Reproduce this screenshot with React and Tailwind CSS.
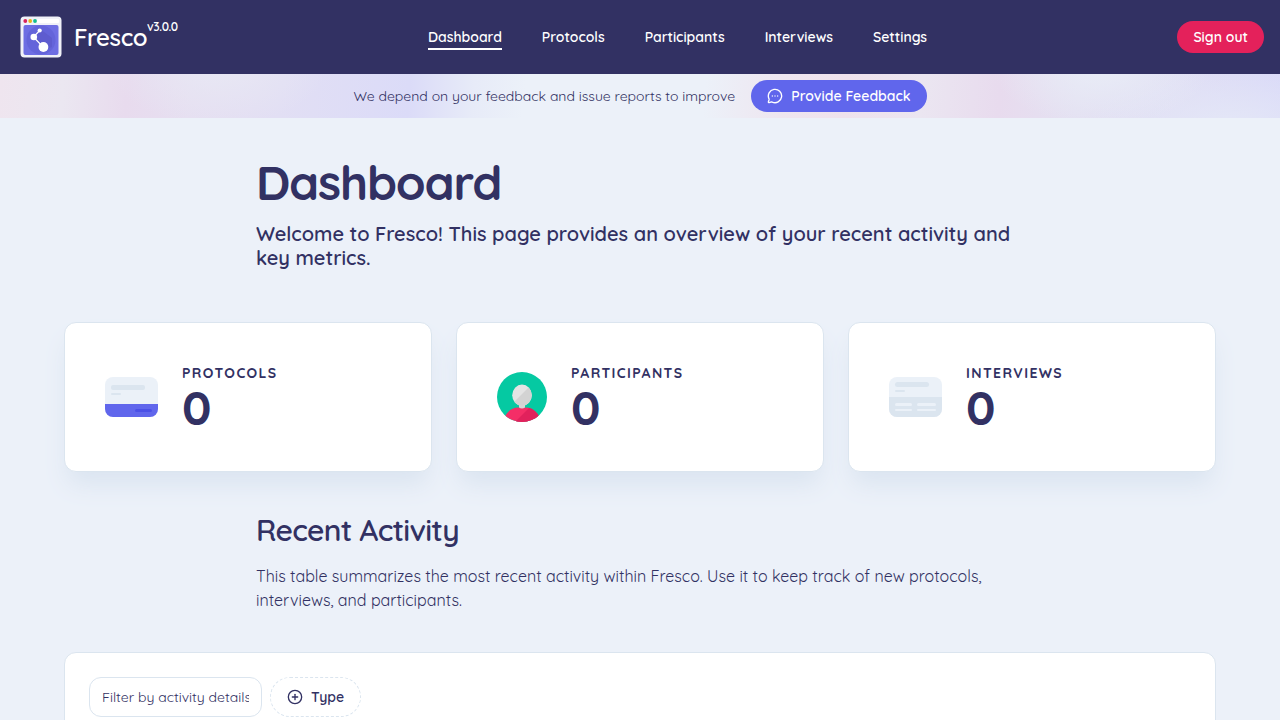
import React from "react";
import { CirclePlus, MessageCircleMore } from "lucide-react";

function Logo() {
  return (
    <svg viewBox="0 0 42 42" className="size-[42px] shrink-0" aria-hidden="true">
      <rect x="0.5" y="0.5" width="41" height="41" rx="4" fill="#f0f1f8" />
      <rect x="17" y="3" width="22" height="4" rx="1" fill="#ffffff" />
      <circle cx="5.300" cy="5" r="1.900" fill="#d8245d" />
      <circle cx="10.200" cy="5" r="1.900" fill="#e8b41c" />
      <circle cx="15" cy="5" r="1.900" fill="#10bd91" />
      <rect x="3.500" y="9" width="35" height="30" rx="2" fill="#6e6ee3" />
      <circle cx="21" cy="24" r="14.500" fill="#6464da" />
      <path d="M20 13l12 9v9l-8 3-10-12z" fill="#5754c4" opacity="0.500" />
      <path d="M19.700 14.500L13.500 21l9.500 10" fill="none" stroke="#fff" strokeWidth="1.200" />
      <circle cx="19.700" cy="14.500" r="2.100" fill="#fff" />
      <circle cx="13.800" cy="21" r="3.300" fill="#fff" />
      <circle cx="23.400" cy="31" r="4.900" fill="#fff" />
    </svg>
  );
}

function ProtocolIcon() {
  return (
    <svg viewBox="0 0 53 40" className="h-10 w-[53px] shrink-0" aria-hidden="true">
      <rect width="53" height="40" rx="8" fill="#ebf1f8" />
      <path d="M0 27h53v5a8 8 0 0 1-8 8H8a8 8 0 0 1-8-8z" fill="#6066ec" />
      <rect x="6" y="8" width="34" height="5" rx="2" fill="#dbe5ef" />
      <rect x="6" y="16" width="10" height="2" rx="1" fill="#dbe5ef" />
      <rect x="30" y="32" width="17" height="3" rx="1.500" fill="#4b50e6" />
    </svg>
  );
}

function ParticipantIcon() {
  return (
    <svg viewBox="0 0 50 50" className="size-[50px] shrink-0" aria-hidden="true">
      <defs>
        <clipPath id="disc">
          <circle cx="25" cy="25" r="25" />
        </clipPath>
        <clipPath id="head-shade">
          <path d="M47 0v47H0z" />
        </clipPath>
        <clipPath id="body-shade">
          <path d="M50 18v32H18z" />
        </clipPath>
      </defs>
      <g clipPath="url(#disc)">
        <rect width="50" height="50" fill="#05c9a2" />
        <path d="M6 50C8 41 14 35.500 21 35.500h8c7 0 13 5.500 15 14.500z" fill="#f42e67" />
        <path
          d="M6 50C8 41 14 35.500 21 35.500h8c7 0 13 5.500 15 14.500z"
          fill="#e1215c"
          clipPath="url(#body-shade)"
        />
        <path d="M22 31h6v4.500c-1.500 1.300-4.500 1.300-6 0z" fill="#d6d6d6" />
        <ellipse cx="25" cy="23.300" rx="9.800" ry="10.700" fill="#e4e4e4" />
        <ellipse cx="25" cy="23.300" rx="9.800" ry="10.700" fill="#d3d3d3" clipPath="url(#head-shade)" />
      </g>
    </svg>
  );
}

function InterviewIcon() {
  return (
    <svg viewBox="0 0 53 40" className="h-10 w-[53px] shrink-0" aria-hidden="true">
      <rect width="53" height="40" rx="8" fill="#ebf1f8" />
      <path d="M0 20h53v12a8 8 0 0 1-8 8H8a8 8 0 0 1-8-8z" fill="#dbe5ef" />
      <rect x="6" y="5" width="34" height="5" rx="2.500" fill="#dbe5ef" />
      <rect x="6" y="13" width="10" height="2" rx="1" fill="#dbe5ef" />
      <rect x="6" y="26" width="17" height="3" rx="1.500" fill="#ebf1f8" />
      <rect x="28" y="26" width="19" height="3" rx="1.500" fill="#ebf1f8" />
      <rect x="6" y="32" width="17" height="2" rx="1" fill="#ebf1f8" />
      <rect x="28" y="32" width="19" height="2" rx="1" fill="#ebf1f8" />
    </svg>
  );
}

const links = ["Dashboard", "Protocols", "Participants", "Interviews", "Settings"];

const stats = [
  { label: "Protocols", value: 0, Icon: ProtocolIcon },
  { label: "Participants", value: 0, Icon: ParticipantIcon },
  { label: "Interviews", value: 0, Icon: InterviewIcon },
];

export default function App() {
  return (
    <div className="min-h-screen bg-[#ecf1f9] font-['Quicksand','Inter',sans-serif] text-[#323163] antialiased">
      <header className="flex items-center justify-between bg-[#323163] px-4 py-4 text-white">
        <a href="#home" className="flex items-center gap-3 pl-1">
          <Logo />
          <span className="flex items-start tracking-tight">
            <span className="text-2xl leading-8 font-semibold">Fresco</span>
            <span className="text-xs leading-3 font-semibold">v3.0.0</span>
          </span>
        </a>
        <nav>
          <ul className="flex items-center gap-10 text-sm leading-5 font-semibold">
            {links.map((name) => (
              <li key={name}>
                <a
                  href={"#" + name.toLowerCase()}
                  aria-current={name === "Dashboard" ? "page" : undefined}
                  className="block border-y-2 border-transparent py-px aria-[current=page]:border-b-white"
                >
                  {name}
                </a>
              </li>
            ))}
          </ul>
        </nav>
        <button type="button" className="h-8 rounded-full bg-[#e4215b] px-4 text-sm font-semibold">
          Sign out
        </button>
      </header>

      <div className="flex h-11 items-center justify-center gap-4 bg-[radial-gradient(110px_60px_at_86%_-20%,#e9edf7_0,#e9edf700_100%),radial-gradient(140px_60px_at_96%_120%,#e4e7f7_0,#e4e7f700_100%),radial-gradient(110px_60px_at_17%_-20%,#e8e8f4_0,#e8e8f400_100%),linear-gradient(95deg,#efe5ef_0%,#ebe7f1_5%,#e8dbee_10%,#e6dff1_15%,#e2dff4_22%,#dbdbf8_32%,#e7ebf8_37%,#ecf1f9_41%,#ecf1f9_55%,#eee6f0_61%,#efe2ed_66%,#ebe6f1_72%,#e8dbee_78%,#e4e1f2_84%,#e0def4_92%,#dadaf8_100%)]">
        <p className="text-sm leading-5">We depend on your feedback and issue reports to improve</p>
        <button
          type="button"
          className="flex h-8 items-center gap-2 rounded-full bg-[#6066ec] px-4 text-sm font-semibold text-white"
        >
          <MessageCircleMore className="size-4" aria-hidden="true" />
          Provide Feedback
        </button>
      </div>

      <main className="flex flex-col px-16 pt-10">
        <section className="mx-auto w-full max-w-3xl">
          <h1 className="text-5xl leading-12 font-bold tracking-tight">Dashboard</h1>
          <p className="mt-4 text-xl leading-6 font-semibold">
            Welcome to Fresco! This page provides an overview of your recent activity and key metrics.
          </p>
        </section>

        <section className="mt-13 grid grid-cols-3 gap-6">
          {stats.map(({ label, value, Icon }) => (
            <a
              key={label}
              href={"#" + label.toLowerCase()}
              className="flex items-center gap-6 rounded-xl border border-[#dbe5ef] bg-white p-10 shadow-[0_16px_24px_-4px_#dae4f0]"
            >
              <Icon />
              <div>
                <h2 className="text-sm leading-5 font-bold tracking-widest uppercase">{label}</h2>
                <p className="text-5xl leading-12 font-bold">{value}</p>
              </div>
            </a>
          ))}
        </section>

        <section className="mx-auto mt-10 w-full max-w-3xl">
          <h2 className="text-3xl leading-9 font-semibold tracking-tight">Recent Activity</h2>
          <p className="mt-4 text-base leading-6">
            This table summarizes the most recent activity within Fresco. Use it to keep track of new protocols,
            interviews, and participants.
          </p>
        </section>

        <section className="mt-10 rounded-xl border border-[#dbe5ef] bg-white p-6">
          <div className="flex items-center gap-2">
            <input
              type="text"
              aria-label="Filter by activity details"
              placeholder="Filter by activity details..."
              className="h-10 w-[173px] rounded-xl border border-[#dbe5ef] px-3 text-sm placeholder:text-[#323163]"
            />
            <button
              type="button"
              className="flex h-10 items-center gap-2 rounded-full border border-dashed border-[#dbe5ef] px-4 text-sm font-semibold"
            >
              <CirclePlus className="size-4" aria-hidden="true" />
              Type
            </button>
          </div>
        </section>
      </main>
    </div>
  );
}
